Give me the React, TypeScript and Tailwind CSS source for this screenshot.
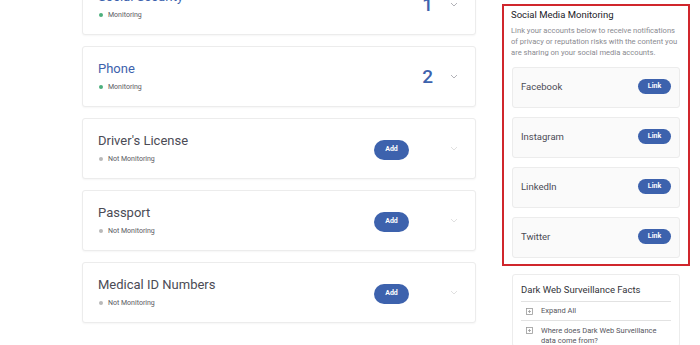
import React from "react";

const BLUE = "#3d62ad";

function Chevron({ light }: { light?: boolean }) {
  return (
    <svg width="8" height="5" viewBox="0 0 8 5" className="block">
      <path d="M1 1 L4 4 L7 1" fill="none" stroke={light ? "#dcdcdc" : "#a9a9b0"} strokeWidth="0.9" />
    </svg>
  );
}

function Card({
  title,
  monitoring,
  count,
}: {
  title: string;
  monitoring: boolean;
  count?: number;
}) {
  return (
    <div className="h-[61px] flex items-center rounded-[3px] border border-[#ececec] bg-white shadow-[0_1px_2px_rgba(0,0,0,0.04)] pl-[15px] pr-[17px]">
      <div className="flex-1 flex flex-col">
        <div
          className="text-[13px] leading-[16px]"
          style={{ color: monitoring ? BLUE : "#4b4b55" }}
        >
          {title}
        </div>
        <div className="flex items-center mt-[5px] h-[10px]">
          <span
            className={`w-[4px] h-[4px] rounded-full ml-[1px] ${monitoring ? "bg-[#4caf7d]" : "bg-[#b9b9b9]"}`}
          />
          <span className="ml-[5px] text-[7px] leading-[10px] text-[#5a5a62]">
            {monitoring ? "Monitoring" : "Not Monitoring"}
          </span>
        </div>
      </div>
      {count !== undefined ? (
        <>
          <div className="text-[19px] leading-[20px] font-medium mr-[17px] text-[#3d62ad]">{count}</div>
          <Chevron />
        </>
      ) : (
        <>
          <button className="w-[35px] h-[20px] rounded-full bg-[#3d62ad] text-white text-[7px] font-bold mr-[41px] mt-[2px]">
            Add
          </button>
          <Chevron light />
        </>
      )}
    </div>
  );
}

function SocialItem({ name }: { name: string }) {
  return (
    <div className="h-[41px] flex items-center justify-between rounded-[3px] border border-[#ececec] bg-[#fafafa] pl-[8px] pr-[8px]">
      <span className="text-[9.5px] text-[#4b4b55]">{name}</span>
      <button className="w-[33px] h-[15px] rounded-full bg-[#3d62ad] text-white text-[7px] font-bold mt-[-2px]">
        Link
      </button>
    </div>
  );
}

function PlusBox() {
  return (
    <svg width="7" height="7" viewBox="0 0 7 7" className="block">
      <rect x="0.5" y="0.5" width="6" height="6" fill="none" stroke="#9a9a9a" strokeWidth="0.8" />
      <path d="M3.5 2 V5 M2 3.5 H5" stroke="#9a9a9a" strokeWidth="0.8" />
    </svg>
  );
}

export default function App() {
  return (
    <div
      className="w-[700px] h-[345px] overflow-hidden bg-white flex"
      style={{ fontFamily: "Roboto, 'Noto Sans', Arial, sans-serif" }}
    >
      <div className="ml-[82px] w-[394px] flex flex-col gap-[11px] mt-[-26px]">
        <Card title="Social Security" monitoring count={1} />
        <Card title="Phone" monitoring count={2} />
        <Card title="Driver's License" monitoring={false} />
        <Card title="Passport" monitoring={false} />
        <Card title="Medical ID Numbers" monitoring={false} />
      </div>
      <div className="ml-[26px] w-[188px] flex flex-col mt-[4px]">
        <div className="border-2 border-[#d0262c] px-[8px] pt-[2px] pb-[6px] flex flex-col">
          <div className="text-[9.5px] leading-[13px] text-[#222228] ml-[-1px]">
            Social Media Monitoring
          </div>
          <div className="mt-[4px] text-[7.6px] leading-[11px] text-[#8a8a90] ml-[-1px] whitespace-nowrap">
            Link your accounts below to receive notifications
            <br />
            of privacy or reputation risks with the content you
            <br />
            are sharing on your social media accounts.
          </div>
          <div className="mt-[9px] flex flex-col gap-[9px]">
            <SocialItem name="Facebook" />
            <SocialItem name="Instagram" />
            <SocialItem name="LinkedIn" />
            <SocialItem name="Twitter" />
          </div>
        </div>
        <div className="mt-[8px] mx-[10px] rounded-[3px] border border-[#ececec] px-[8px] pt-[8px]">
          <div className="text-[9.5px] leading-[13px] text-[#33333a] pb-[5px] border-b border-[#e2e2e2]">
            Dark Web Surveillance Facts
          </div>
          <div className="flex items-center h-[19px] border-b border-[#e2e2e2] pl-[5px]">
            <PlusBox />
            <span className="ml-[8px] text-[7.5px] text-[#55555c]">Expand All</span>
          </div>
          <div className="flex items-start pt-[5px] pl-[5px]">
            <div className="mt-[1px]">
              <PlusBox />
            </div>
            <span className="ml-[8px] text-[7.5px] leading-[10px] text-[#55555c]">
              Where does Dark Web Surveillance
              <br />
              data come from?
            </span>
          </div>
        </div>
      </div>
    </div>
  );
}
